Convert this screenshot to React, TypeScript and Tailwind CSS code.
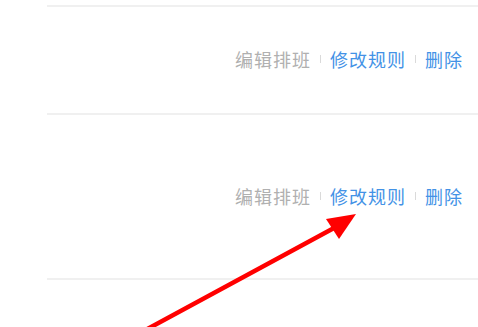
export default function App() {
  const rows = [
    { pt: 'pt-[43px]', pb: 'pb-[45px]' },
    { pt: 'pt-[72px]', pb: 'pb-[73px]' },
  ];

  return (
    <div className="relative h-[327px] w-[478px] overflow-hidden bg-white" style={{ fontFamily: '"Noto Sans CJK SC", "Noto Sans", sans-serif' }}>
      <div className="pt-[5px] pl-[47px]">
        {rows.map((r, i) => (
          <div key={i} className={`border-t-2 border-[#f0f0f0] ${r.pt} ${r.pb} pr-[15px] flex justify-end items-center text-[18px] leading-[18px] tracking-[1px]`}>
            <span className="text-[#b0b0b0]">编辑排班</span>
            <span className="mx-[9px] h-[8px] w-px bg-[#dadada]" />
            <span className="text-[#4392e6]">修改规则</span>
            <span className="mx-[9px] h-[8px] w-px bg-[#dadada]" />
            <span className="text-[#4392e6]">删除</span>
          </div>
        ))}
        <div className="border-t-2 border-[#f0f0f0]" />
      </div>

      {/* red annotation arrow */}
      <svg className="absolute inset-0" width="478" height="327" viewBox="0 0 478 327">
        <line x1="140" y1="333" x2="334" y2="228" stroke="#ff0000" strokeWidth="4.5" strokeLinecap="round" />
        <polygon points="356,214 326,219 339,239" fill="#ff0000" />
      </svg>
    </div>
  );
}
